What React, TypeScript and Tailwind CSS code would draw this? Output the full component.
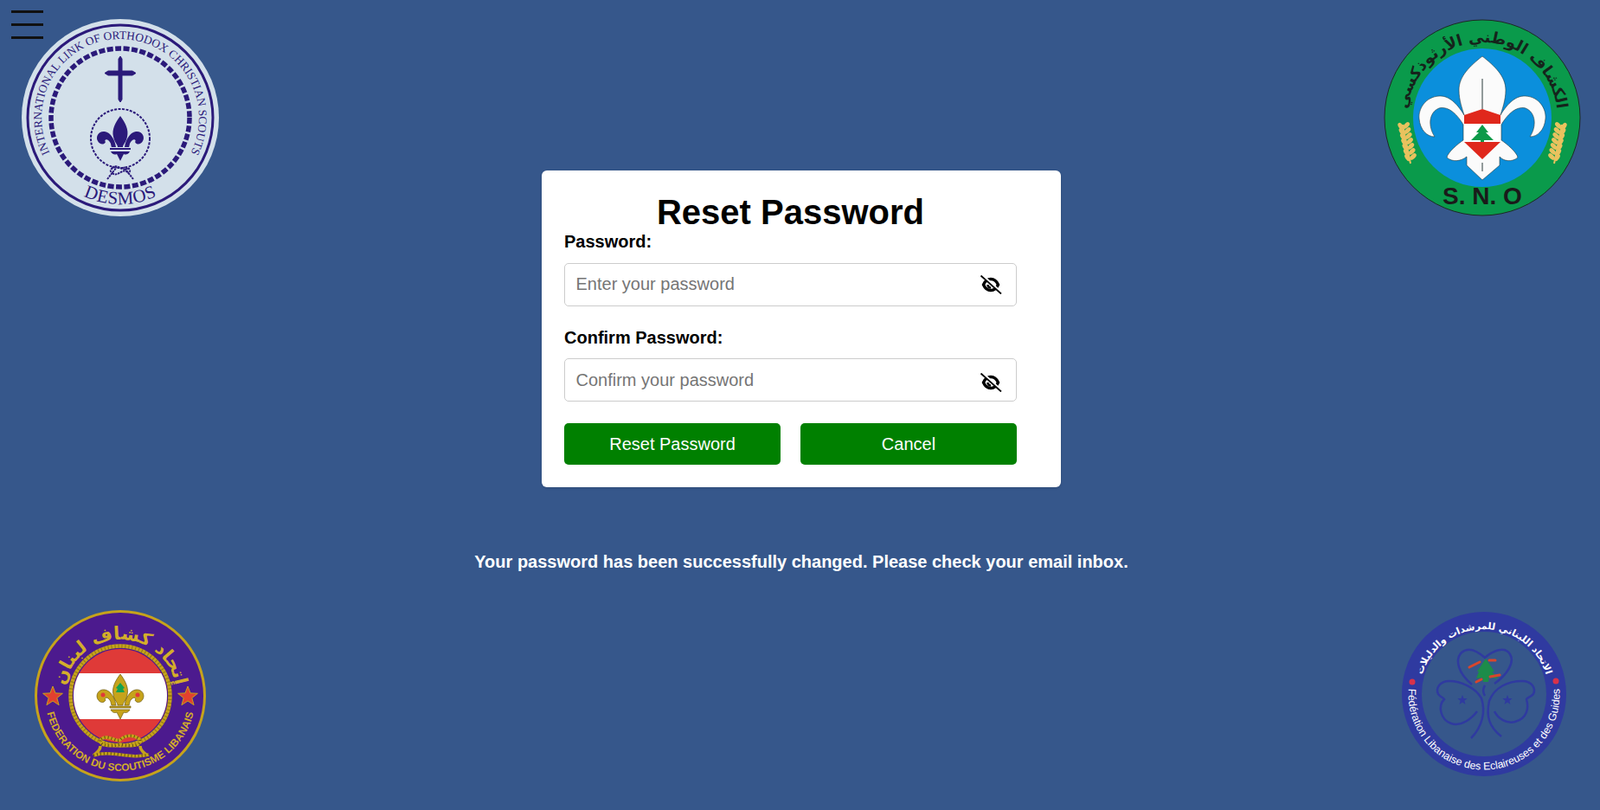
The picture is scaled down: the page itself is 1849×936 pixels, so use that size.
const serif = "'Liberation Serif', serif";
const sans = "'Liberation Sans', sans-serif";
const arabic = "'DejaVu Sans', sans-serif";

// full circles, so that 50% of the path is the top / the bottom of the ring
const overTop = (r: number) => `M0,${r} A${r},${r} 0 1 1 0,${-r} A${r},${r} 0 1 1 0,${r}`;
const underBottom = (r: number) => `M0,${-r} A${r},${r} 0 1 0 0,${r} A${r},${r} 0 1 0 0,${-r}`;

function RingText({ id, d, children, size, fill, family, weight, spacing }: {
  id: string; d: string; children: string; size: number; fill: string; family: string; weight?: number; spacing?: number;
}) {
  return (
    <>
      <path id={id} d={d} fill="none" />
      <text fontSize={size} fill={fill} fontFamily={family} fontWeight={weight} letterSpacing={spacing} textAnchor="middle">
        <textPath href={`#${id}`} startOffset="50%">{children}</textPath>
      </text>
    </>
  );
}

function Star({ x, y, r, fill, stroke }: { x: number; y: number; r: number; fill: string; stroke?: string }) {
  const pts = Array.from({ length: 10 }, (_, i) => {
    const a = (i * Math.PI) / 5 - Math.PI / 2;
    const q = i % 2 ? r * 0.42 : r;
    return `${(x + q * Math.cos(a)).toFixed(1)},${(y + q * Math.sin(a)).toFixed(1)}`;
  }).join(' ');
  return <polygon points={pts} fill={fill} stroke={stroke} strokeWidth={stroke ? 1 : 0} />;
}

const fleurPath =
  'M0,-26 C6,-18 10,-10 8,-2 C7,4 3,7 3,10 L-3,10 C-3,7 -7,4 -8,-2 C-10,-10 -6,-18 0,-26 Z ' +
  'M5,10 C6,2 11,-7 18,-8 C25,-9 29,-2 26,3 C24,7 19,8 17,4 C19,2 16,0 14,2 C10,5 11,9 10,10 Z ' +
  'M-5,10 C-6,2 -11,-7 -18,-8 C-25,-9 -29,-2 -26,3 C-24,7 -19,8 -17,4 C-19,2 -16,0 -14,2 C-10,5 -11,9 -10,10 Z ' +
  'M-11,15 L11,15 C9,19 6,19 4,18 L0,26 L-4,18 C-6,19 -9,19 -11,15 Z M-12,11 H12 V13 H-12 Z';

function DesmosLogo() {
  return (
    <svg width="228" height="228" viewBox="-114 -114 228 228">
      <circle r="114" fill="#d3e0ea" />
      <circle r="107" fill="none" stroke="#2b1a7a" strokeWidth="3" />
      <circle r="80" fill="none" stroke="#2b1a7a" strokeWidth="5.5" strokeDasharray="7 2.5" />
      <RingText id="desmos-top" d={overTop(91)} size={13.4} fill="#2b1a7a" family={serif}>
        INTERNATIONAL LINK OF ORTHODOX CHRISTIAN SCOUTS
      </RingText>
      <RingText id="desmos-bottom" d={underBottom(100)} size={21} fill="#2b1a7a" family={serif} spacing={0.5}>
        DESMOS
      </RingText>
      <path d="M-2,-68 L0,-71 L2,-68 L2,-54 H14 L18,-51.5 L14,-49 H2 V-21 L0,-18 L-2,-21 V-49 H-14 L-18,-51.5 L-14,-54 H-2 Z" fill="#2b1a7a" stroke="#2b1a7a" strokeLinejoin="round" />
      <circle cy="24" r="34" fill="none" stroke="#2b1a7a" strokeWidth="2" strokeDasharray="3 1.5" />
      <path d={fleurPath} transform="translate(0 24)" fill="#2b1a7a" />
      <path d="M-15,71 L-4,57 M15,71 L4,57 M-9,58 C-4,52 4,64 9,58 M-9,64 C-4,70 4,56 9,64 M-9,58 C-12,61 -12,62 -9,64 M9,58 C12,61 12,62 9,64" fill="none" stroke="#2b1a7a" strokeWidth="2" strokeDasharray="2.5 0.8" />
    </svg>
  );
}

function Wheat({ flip }: { flip?: boolean }) {
  const grains = [0, 1, 2, 3, 4, 5, 6];
  return (
    <g transform={flip ? 'scale(-1 1)' : undefined}>
      <path d="M-92,8 L-83,53" stroke="#e9c25e" strokeWidth="2" />
      {grains.map((i) => (
        <g key={i} transform={`translate(${-91 + i * 1.3} ${12 + i * 6})`}>
          <ellipse cx="-3.2" cy="-2" rx="4.6" ry="2.6" transform="rotate(55 -3.2 -2)" fill="#e9c25e" />
          <ellipse cx="3.2" cy="-3" rx="4.6" ry="2.6" transform="rotate(-45 3.2 -3)" fill="#e9c25e" />
        </g>
      ))}
    </g>
  );
}

function SnoLogo() {
  return (
    <svg width="228" height="228" viewBox="-114 -114 228 228">
      <circle r="113" fill="#0a9a4b" stroke="#1c2a22" strokeWidth="1" />
      <circle r="80" fill="#0b8fdc" />
      <RingText id="sno-top" d={overTop(87)} size={18} fill="#15231b" family={arabic} weight={700}>
        الكشاف الوطني الأرثوذكسي
      </RingText>
      <Wheat />
      <Wheat flip />
      <path
        d="M0,-71 C14,-60 27,-48 27,-32 C27,-20 23,-10 21,-3 C27,-13 37,-26 50,-25 C66,-24 74,-10 73,1 C72,14 64,22 55,22 C63,10 62,-6 50,-11 C38,-14 28,-2 22,8 L22,26 C28,30 40,40 41,46 C34,52 24,50 20,45 L20,55 L0,72 L-18,55 L-18,45 C-24,50 -34,52 -41,46 C-40,40 -28,30 -22,26 L-22,8 C-28,-2 -38,-14 -50,-11 C-62,-6 -63,10 -55,22 C-64,22 -72,14 -73,1 C-74,-10 -66,-24 -50,-25 C-37,-26 -27,-13 -21,-3 C-23,-10 -27,-20 -27,-32 C-27,-48 -14,-60 0,-71 Z"
        fill="#fbfbfb"
        stroke="#2a3a3a"
        strokeWidth="0.6"
      />
      <path d="M0,-45 V-4 M0,52 V62" stroke="#2a3a3a" strokeWidth="1" />
      <path d="M-21,-3 L0,-10 L21,-3 V28 L0,48 L-21,28 Z" fill="#fff" />
      <path d="M-21,-3 L0,-10 L21,-3 V7 H-21 Z M-21,28 L21,28 L0,48 Z" fill="#e0281c" />
      <path d="M0,8 L7,17 H4 L13,26 H-13 L-4,17 H-7 Z" fill="#0d9a49" />
      <rect x="-2" y="26" width="4" height="2" fill="#0d9a49" />
      <text y="100" textAnchor="middle" fontSize="28" fontWeight="700" fill="#1a1a1a" fontFamily={sans}>S. N. O</text>
    </svg>
  );
}

function FederationLogo() {
  return (
    <svg width="198" height="198" viewBox="-99 -99 198 198">
      <circle r="97.5" fill="#4c1a8e" stroke="#c6a31b" strokeWidth="3" />
      <clipPath id="flag-clip"><circle r="54" /></clipPath>
      <g clipPath="url(#flag-clip)">
        <rect x="-54" y="-54" width="108" height="108" fill="#df3a38" />
        <rect x="-54" y="-26" width="108" height="53" fill="#fff" />
      </g>
      <circle r="57.5" fill="none" stroke="#c6a31b" strokeWidth="4.5" />
      <circle r="57.5" fill="none" stroke="#6d5a10" strokeWidth="4.5" strokeDasharray="1 3" opacity="0.6" />
      <RingText id="fed-top" d={overTop(65)} size={21} fill="#d3ae2a" family={arabic} weight={700}>
        إتحاد كشاف لبنان
      </RingText>
      <RingText id="fed-bottom" d={underBottom(87)} size={12} fill="#d3ae2a" family={sans} weight={700}>
        FEDERATION DU SCOUTISME LIBANAIS
      </RingText>
      <Star x={-78} y={1} r={12} fill="#e2402f" stroke="#c6a31b" />
      <Star x={78} y={1} r={12} fill="#e2402f" stroke="#c6a31b" />
      <path d={fleurPath} transform="translate(0 1)" fill="#c6a31b" stroke="#6d5a10" strokeWidth="0.7" />
      <path d="M0,-15 L5,-9 L3,-8 L5,-4 H-5 L-3,-8 L-5,-9 Z" fill="#12a24f" />
      <circle cx="-20" cy="-1" r="2.5" fill="#df3a38" />
      <circle cx="20" cy="-1" r="2.5" fill="#df3a38" />
      <g fill="none" strokeWidth="3.5">
        <path d="M-22,50 C-14,44 -4,54 0,51 C4,46 14,44 22,50 C26,57 14,60 0,56 C-14,60 -26,57 -22,50 Z M-23,58 C-23,64 -28,66 -31,69 M23,58 C23,64 28,66 31,69 M-31,69 C-10,62 10,74 33,68" stroke="#c6a31b" />
        <path d="M-22,50 C-14,44 -4,54 0,51 C4,46 14,44 22,50 C26,57 14,60 0,56 C-14,60 -26,57 -22,50 Z M-31,69 C-10,62 10,74 33,68" stroke="#5d4c0c" strokeDasharray="1 3" />
      </g>
    </svg>
  );
}

function GuidesLogo() {
  const blue = '#2f3aa0';
  return (
    <svg width="190" height="190" viewBox="-95 -95 190 190">
      <circle r="83.5" fill="none" stroke={blue} strokeWidth="23" />
      <RingText id="guides-top" d={overTop(75)} size={11} fill="#fff" family={arabic} weight={700} spacing={-0.2}>
        الاتحاد اللبناني للمرشدات والدليلات
      </RingText>
      <RingText id="guides-bottom" d={underBottom(87.5)} size={12.4} fill="#fff" family={sans}>
        Fédération Libanaise des Eclaireuses et des Guides
      </RingText>
      <circle cx="-83" cy="-14" r="3.5" fill="#d8324a" />
      <circle cx="83" cy="-15" r="3.5" fill="#d8324a" />
      <g fill="none" stroke={blue} strokeWidth="2.5">
        <path d="M-14,-11 C-30,-24 -34,-40 -26,-48 C-18,-55 -8,-50 1,-42 C10,-50 24,-56 30,-46 C36,-36 26,-22 12,-12" />
        <path d="M1,-10 C-2,-5 -1,-1 1,2" />
        <path d="M-15,51 C-2,38 2,20 -3,5 C-10,-8 -28,-15 -40,-15 C-52,-15 -56,-6 -53,0 C-50,4 -47,4 -46,6 C-54,14 -50,30 -38,34 C-26,38 -14,28 -8,20" />
        <path d="M20,49 C6,38 2,26 6,8 C12,-8 28,-15 44,-15 C56,-15 60,-6 57,0 C53,4 50,4 49,6 C52,16 50,28 36,32 C26,35 16,28 12,20" />
      </g>
      <Star x={-25} y={7} r={6} fill={blue} />
      <Star x={27} y={7} r={6} fill={blue} />
      <path d="M2,-41 L12,-26 H9 L16,-18 L6,-19 L5,-14 H-1 L-2,-19 L-9,-18 L-6,-26 L-8,-26 Z" fill="#1d8c4a" />
      <g stroke="#d8462c" strokeWidth="3" strokeLinecap="round">
        <path d="M-17,-31 L-5,-37" />
        <path d="M6,-39 L13,-39" />
        <path d="M7,-20 L18,-22" />
        <path d="M-9,-14 L-3,-17" />
      </g>
    </svg>
  );
}

function EyeOff({ className }: { className?: string }) {
  return (
    <svg viewBox="0 0 26 22" className={className} fill="none">
      <path d="M4.500,11 C6.500,6.500 10,4.500 13,4.500 C16,4.500 19.500,6.500 21.500,11 C19.500,15.500 16,17.500 13,17.500 C10,17.500 6.500,15.500 4.500,11 Z" stroke="#000" strokeWidth="3.400" />
      <path d="M9.500,11 A3.500,3.500 0 0 0 13,14.500" stroke="#000" strokeWidth="2.600" />
      <path d="M3,0 L25,20" stroke="#fff" strokeWidth="3" />
      <path d="M1.500,0.500 L25,21.500" stroke="#000" strokeWidth="1.800" />
    </svg>
  );
}

function PasswordField({ label, placeholder, gap, inputPad, iconPad }: {
  label: string; placeholder: string; gap: string; inputPad: string; iconPad: string;
}) {
  return (
    <div>
      <label className="block text-[20px] leading-[23px] font-bold text-black">{label}</label>
      <div className={`${gap} flex h-[50px] items-center rounded-[5px] border border-[#cccccc] bg-white pl-[12.5px] pr-[16px]`}>
        <input
          type="password"
          placeholder={placeholder}
          className={`min-w-0 flex-1 text-[20px] outline-none placeholder:text-[#757575] ${inputPad}`}
        />
        <EyeOff className={`h-[22px] w-[26px] ${iconPad}`} />
      </div>
    </div>
  );
}

export default function App() {
  return (
    <div className="relative flex h-[936px] overflow-hidden bg-[#36578b] font-['Liberation_Sans',Arial,sans-serif]">
      <button className="absolute left-[13px] top-[12px] flex h-[33px] w-[37px] flex-col justify-between">
        <span className="h-[3px] w-full bg-[#111111]" />
        <span className="h-[3px] w-full bg-[#111111]" />
        <span className="h-[3px] w-full bg-[#111111]" />
      </button>

      <div className="flex w-[278px] flex-col justify-between pt-[22px] pb-[33px]">
        <div className="ml-[25px]"><DesmosLogo /></div>
        <div className="ml-[40px]"><FederationLogo /></div>
      </div>

      <div className="flex flex-1 flex-col items-center pt-[197px]">
        <div className="w-[600px] rounded-[6px] bg-white px-[26px] pt-[25px] pb-[26px] shadow-[0_1px_3px_rgba(0,0,0,0.15)]">
          <div className="w-[523px]">
            <h1 className="text-center text-[40px] leading-[46px] font-bold text-black">Reset Password</h1>
            <PasswordField label="Password:" placeholder="Enter your password" gap="mt-[13px]" inputPad="pb-[2px]" iconPad="" />
            <div className="mt-[25px]">
              <PasswordField label="Confirm Password:" placeholder="Confirm your password" gap="mt-[12px]" inputPad="pb-[0px]" iconPad="mt-[6px]" />
            </div>
            <div className="mt-[25px] flex gap-[23px]">
              <button className="h-[48px] flex-1 rounded-[5px] bg-[#008000] text-[20px] text-white">Reset Password</button>
              <button className="h-[48px] flex-1 rounded-[5px] bg-[#008000] text-[20px] text-white">Cancel</button>
            </div>
          </div>
        </div>
        <p className="mt-[75px] text-center text-[20px] leading-[23px] font-bold text-white">
          Your password has been successfully changed. Please check your email inbox.
        </p>
      </div>

      <div className="flex w-[275px] flex-col items-end justify-between pt-[22px] pb-[39px]">
        <div className="mr-[22px]"><SnoLogo /></div>
        <div className="mr-[39px]"><GuidesLogo /></div>
      </div>
    </div>
  );
}
